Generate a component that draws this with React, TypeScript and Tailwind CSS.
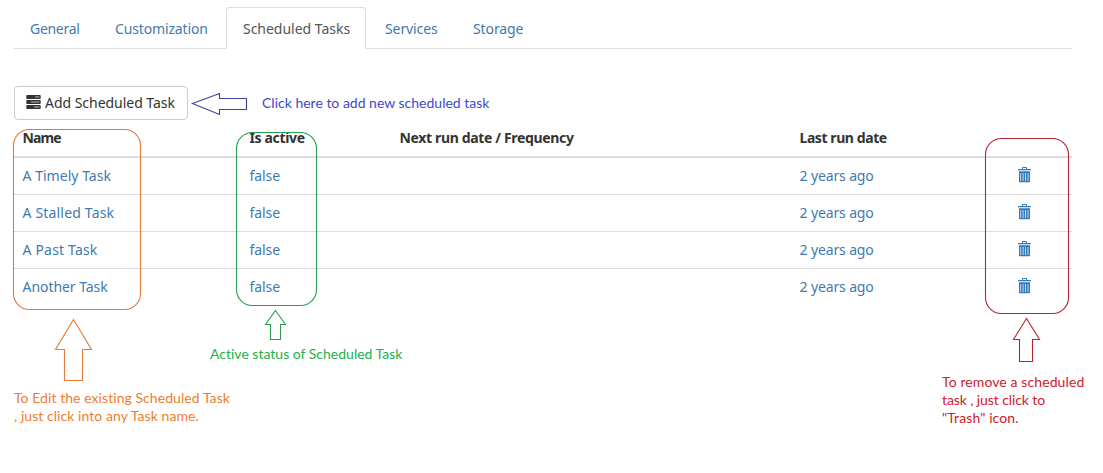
const tabs = [
  { label: 'General', box: 'w-[85px] pl-[15px] tracking-[-0.3px]' },
  { label: 'Customization', box: 'w-[127px] pl-[15px] tracking-[-0.15px]' },
  { label: 'Scheduled Tasks', box: 'w-[140px] pl-4 tracking-[-0.02px]', active: true },
  { label: 'Services', box: 'ml-[3px] w-[88px] pl-[15px] tracking-[-0.1px]' },
  { label: 'Storage', box: 'w-[84px] pl-[15px] tracking-[-0.1px]' },
];

const tasks = [
  { name: 'A Timely Task', tracking: 'tracking-[0.03px]' },
  { name: 'A Stalled Task', tracking: 'tracking-[0.18px]' },
  { name: 'A Past Task', tracking: 'tracking-[0.18px]' },
  { name: 'Another Task', tracking: 'tracking-[-0.05px]' },
];

const columns = 'grid grid-cols-[227px_150px_400px_218px_63px] pl-[8.5px]';

function TasksIcon() {
  return (
    <svg width="15" height="14" viewBox="0 0 15 14" className="mr-1 -mt-[3px] shrink-0">
      <g fill="#333">
        <rect x="0.3" y="0" width="14.4" height="4" rx="0.8" />
        <rect x="0.3" y="5" width="14.4" height="4" rx="0.8" />
        <rect x="0.3" y="10" width="14.4" height="4" rx="0.8" />
      </g>
      <g fill="#bbb">
        <rect x="9" y="1.5" width="4.5" height="1" />
        <rect x="5" y="6.5" width="8.5" height="1" />
        <rect x="8" y="11.5" width="5.5" height="1" />
      </g>
    </svg>
  );
}

function TrashIcon() {
  return (
    <svg width="13" height="16" viewBox="0 0 13 16" className="mt-[9px]">
      <g fill="#337ab7">
        <path d="M4 2V1q0-1 1-1h3q1 0 1 1v1h3.500q.5 0 .5.5V3.200H0V2.500Q0 2 .5 2zM5 2h3V1H5z" />
        <path d="M1 4.200h11V14.500q0 .7-.7.7H1.700q-.7 0-.7-.7z" />
      </g>
      <g fill="#c5d6ec">
        <rect x="2.200" y="6" width="1" height="8" />
        <rect x="4.600" y="6" width="1" height="8" />
        <rect x="7" y="6" width="1" height="8" />
        <rect x="9.500" y="6" width="1" height="8" />
      </g>
    </svg>
  );
}

function Markers() {
  return (
    <svg
      width="1103"
      height="473"
      viewBox="0 0 1103 473"
      fill="none"
      strokeWidth="1.1"
      className="pointer-events-none absolute left-0 top-0"
    >
      <g stroke="#e07b39">
        <rect x="13.500" y="129.500" width="127" height="180" rx="16" />
        <path d="M73.500 319.500L91.500 349.500H82.500V380.500H64.500V349.500H55.500Z" />
      </g>
      <g stroke="#2a9d50">
        <rect x="236.500" y="132.500" width="80" height="173" rx="16" />
        <path d="M275.500 310.500L285.500 324.500H280.500V339.500H270.500V324.500H265.500Z" />
      </g>
      <g stroke="#b5252f">
        <rect x="985.500" y="138.500" width="83" height="175" rx="16" />
        <path d="M1026.500 318.500L1039.500 339.500H1032.500V361.500H1019.500V339.500H1013.500Z" />
      </g>
      <path stroke="#3b419b" d="M192.500 103.500L219.500 93.500V98.500H246.500V109.500H219.500V114.500Z" />
    </svg>
  );
}

export default function App() {
  return (
    <div className="relative h-[473px] w-[1103px] overflow-hidden bg-white pl-[14px] pt-[7px] font-['Noto_Sans',sans-serif] text-[14px] leading-5 text-[#333]">
      <nav className="flex h-[42px] w-[1058px] border-b border-[#ddd]">
        {tabs.map((t) => (
          <a
            key={t.label}
            className={`h-[42px] shrink-0 whitespace-nowrap border pt-[11px] ${t.box} ${
              t.active
                ? 'rounded-t border-[#ddd] border-b-white bg-white text-[#555]'
                : 'border-transparent text-[#3f7ab0]'
            }`}
          >
            {t.label}
          </a>
        ))}
      </nav>

      <button className="mt-[37px] flex h-[34px] w-[174px] items-center whitespace-nowrap rounded border border-[#ccc] bg-white pl-[11px] tracking-[-0.03px]">
        <TasksIcon />
        Add Scheduled Task
      </button>

      <div className="w-[1058px]">
        <div className={`${columns} h-[38px] border-b-2 border-[#ddd] pt-[8px] font-bold`}>
          <span className="tracking-[-0.9px]">Name</span>
          <span className="tracking-[-0.35px]">Is active</span>
          <span className="tracking-[-0.35px]">Next run date / Frequency</span>
          <span className="tracking-[-0.42px]">Last run date</span>
        </div>
        {tasks.map((t) => (
          <div
            key={t.name}
            className={`${columns} h-[37px] border-b border-[#ddd] pt-[8px] text-[#3f7ab0] last:border-b-0`}
          >
            <a className={t.tracking}>{t.name}</a>
            <a className="tracking-[-0.08px]">false</a>
            <span />
            <a className="tracking-[-0.13px]">2 years ago</a>
            <a className="-mt-[8px]">
              <TrashIcon />
            </a>
          </div>
        ))}
      </div>

      <Markers />

      <div className="font-[Lato,sans-serif] text-[14px] leading-[18px] [font-variant-ligatures:none]">
        <p className="absolute left-[262px] top-[94px] whitespace-nowrap text-[#3f48cc]">
          Click here to add new scheduled task
        </p>
        <p className="absolute left-[210px] top-[345px] whitespace-nowrap text-[#22b14c]">
          Active status of Scheduled Task
        </p>
        <p className="absolute left-[14px] top-[389px] whitespace-nowrap tracking-[0.06px] text-[#ed7d31]">
          To Edit the existing Scheduled Task
          <br />, just click into any Task name.
        </p>
        <p className="absolute left-[942px] top-[373px] whitespace-nowrap text-[#d0202a]">
          <span className="tracking-[0.1px]">To remove a scheduled</span>
          <br />
          <span className="tracking-[-0.1px]">task , just click to</span>
          <br />
          <span className="tracking-[0.1px]">"Trash" icon.</span>
        </p>
      </div>
    </div>
  );
}
